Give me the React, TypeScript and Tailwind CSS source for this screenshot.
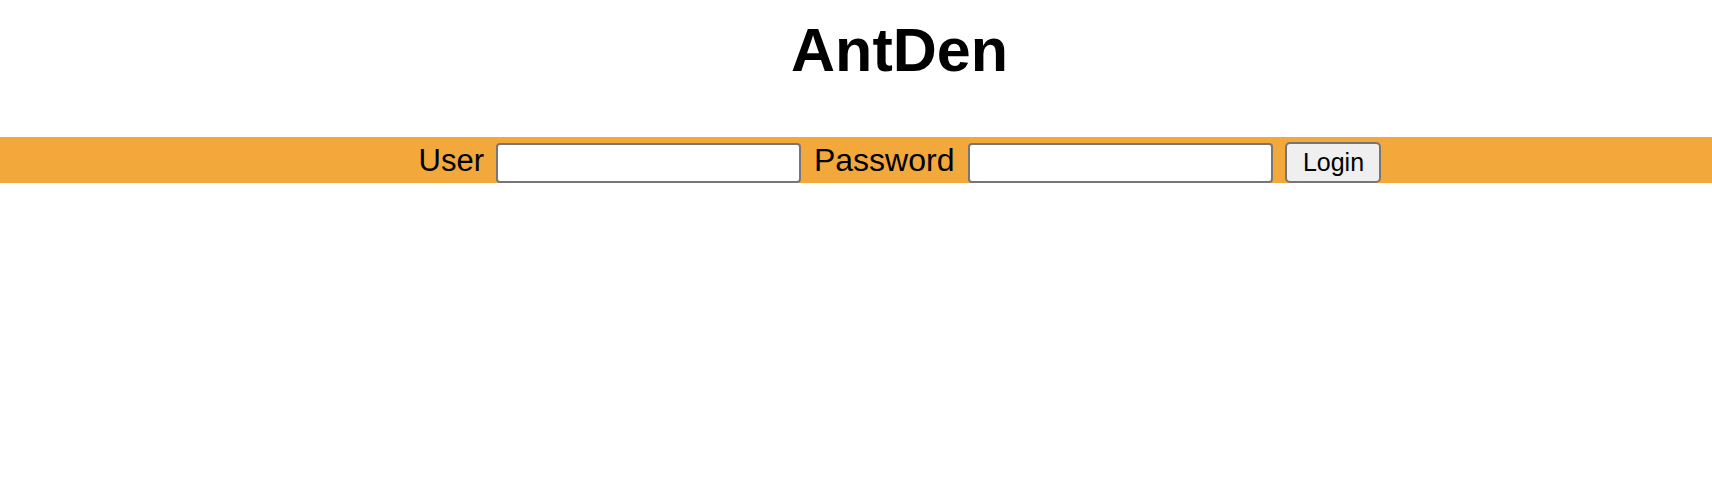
import React from "react";

export default function App() {
  return (
    <div className="w-full min-h-[496px] bg-white text-black" style={{ fontFamily: '"Liberation Sans", Arial, Helvetica, sans-serif' }}>
      <div className="h-[137px] pt-[20px] pl-[87px] text-center">
        <h1 className="text-[61px] leading-none font-bold m-0">AntDen</h1>
      </div>
      <div className="h-[46px] bg-[#f3a83c] flex justify-center items-start pt-[6px] pl-[88px]">
        <span className="text-[31px] leading-none mt-[2px] mr-[12px]">User</span>
        <input type="text" className="w-[305px] h-[40px] bg-white border-2 border-[#767676] rounded-[4px] mr-[13px] outline-none" />
        <span className="text-[32px] leading-none mt-[1px] mr-[14px]">Password</span>
        <input type="password" className="w-[305px] h-[40px] bg-white border-2 border-[#767676] rounded-[4px] mr-[12px] outline-none" />
        <button className="w-[96px] h-[41px] -mt-[1px] bg-[#efefef] border-2 border-[#767676] rounded-[5px] flex justify-center items-center">
          <span className="text-[25px] leading-none">Login</span>
        </button>
      </div>
    </div>
  );
}
